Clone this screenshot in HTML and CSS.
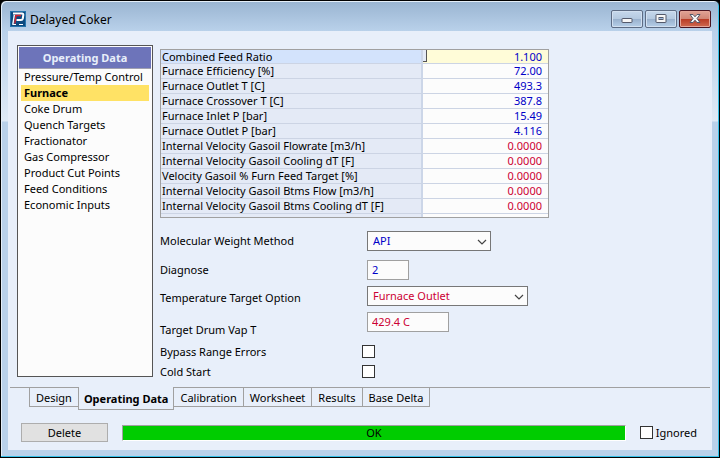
FILE: index.html
```html
<!DOCTYPE html>
<html lang="en">
<head>
<meta charset="utf-8">
<title>Delayed Coker</title>
<link rel="stylesheet" href="styles.css">
</head>
<body>
<div class="window">
  <header class="titlebar">
    <svg class="app-icon" width="16" height="16" viewBox="0 0 16 16" aria-hidden="true">
      <rect width="16" height="16" fill="#0c4a80"/>
      <rect x="0.5" y="0.5" width="15" height="15" fill="none" stroke="#2474ac"/>
      <path d="M3 2.500 H12 Q13.500 2.500 13.300 4 L12.800 7.500 Q12.500 9 11 9 H6.500" fill="none" stroke="#fff" stroke-width="2"/>
      <path d="M4.300 4 L2.800 13.500" fill="none" stroke="#fff" stroke-width="1.400"/>
      <path d="M5 4.500 H11 M6 5 L4.800 12.500" fill="none" stroke="#d8202c" stroke-width="1.400"/>
      <path d="M2.500 13.500 H6 M9 13.500 H13" stroke="#fff" stroke-width="1"/>
    </svg>
    <h1 class="title">Delayed Coker</h1>
    <div class="window-buttons">
      <button class="window-button" type="button" aria-label="Minimize">
        <svg width="12" height="10" viewBox="0 0 12 10"><rect x="1" y="4.500" width="10" height="4" rx="0.500" fill="#f6f6f6" stroke="#53596b"/></svg>
      </button>
      <button class="window-button" type="button" aria-label="Maximize">
        <svg width="12" height="10" viewBox="0 0 12 10"><rect x="1" y="0.500" width="10" height="8" rx="0.500" fill="#f6f6f6" stroke="#53596b"/><rect x="4" y="3.500" width="4" height="2" fill="#9db9dc" stroke="#53596b"/></svg>
      </button>
      <button class="window-button close" type="button" aria-label="Close">
        <svg width="12" height="10" viewBox="0 0 12 10"><path d="M1 0.500 H4 L6 2.800 L8 0.500 H11 L8 4.500 L11 8.500 H8 L6 6.200 L4 8.500 H1 L4 4.500 Z" fill="#f6f6f6" stroke="#53596b"/></svg>
      </button>
    </div>
  </header>
  <main class="client">
    <div class="page">
      <nav class="sidebar">
        <h2 class="sidebar-title">Operating Data</h2>
        <ul class="sidebar-list">
          <li><a href="#">Pressure/Temp Control</a></li>
          <li><a href="#" class="current">Furnace</a></li>
          <li><a href="#">Coke Drum</a></li>
          <li><a href="#">Quench Targets</a></li>
          <li><a href="#">Fractionator</a></li>
          <li><a href="#">Gas Compressor</a></li>
          <li><a href="#">Product Cut Points</a></li>
          <li><a href="#">Feed Conditions</a></li>
          <li><a href="#">Economic Inputs</a></li>
        </ul>
      </nav>
      <div class="details">
        <table class="grid">
          <tbody>
            <tr class="selected"><th scope="row">Combined Feed Ratio</th><td>1.100</td></tr>
            <tr><th scope="row">Furnace Efficiency [%]</th><td>72.00</td></tr>
            <tr><th scope="row">Furnace Outlet T [C]</th><td>493.3</td></tr>
            <tr><th scope="row">Furnace Crossover T [C]</th><td>387.8</td></tr>
            <tr><th scope="row">Furnace Inlet P [bar]</th><td>15.49</td></tr>
            <tr><th scope="row">Furnace Outlet P [bar]</th><td>4.116</td></tr>
            <tr><th scope="row">Internal Velocity Gasoil Flowrate [m3/h]</th><td class="default">0.0000</td></tr>
            <tr><th scope="row">Internal Velocity Gasoil Cooling dT [F]</th><td class="default">0.0000</td></tr>
            <tr><th scope="row">Velocity Gasoil % Furn Feed Target [%]</th><td class="default">0.0000</td></tr>
            <tr><th scope="row">Internal Velocity Gasoil Btms Flow [m3/h]</th><td class="default">0.0000</td></tr>
            <tr><th scope="row">Internal Velocity Gasoil Btms Cooling dT [F]</th><td class="default">0.0000</td></tr>
            <tr class="filler"><th></th><td></td></tr>
          </tbody>
        </table>
        <form class="form">
          <label for="method">Molecular Weight Method</label>
          <span class="select method">
            <select id="method"><option>API</option></select>
            <svg width="10" height="6" viewBox="0 0 10 6"><path d="M1 1 L5 5 L9 1" fill="none" stroke="#444" stroke-width="1.200"/></svg>
          </span>
          <label for="diagnose">Diagnose</label>
          <input class="field diagnose" id="diagnose" type="text" value="2">
          <label class="low" for="option">Temperature Target Option</label>
          <span class="select option">
            <select id="option"><option>Furnace Outlet</option></select>
            <svg width="10" height="6" viewBox="0 0 10 6"><path d="M1 1 L5 5 L9 1" fill="none" stroke="#444" stroke-width="1.200"/></svg>
          </span>
          <label class="low" for="target">Target Drum Vap T</label>
          <input class="field target" id="target" type="text" value="429.4 C">
          <label class="tick" for="bypass">Bypass Range Errors</label>
          <input class="check" id="bypass" type="checkbox">
          <label class="tick" for="cold">Cold Start</label>
          <input class="check" id="cold" type="checkbox">
        </form>
      </div>
    </div>
    <nav class="tabs">
      <button class="tab" type="button">Design</button>
      <button class="tab active" type="button">Operating Data</button>
      <button class="tab" type="button">Calibration</button>
      <button class="tab" type="button">Worksheet</button>
      <button class="tab" type="button">Results</button>
      <button class="tab" type="button">Base Delta</button>
      <span class="tab-rest"></span>
    </nav>
    <footer class="footer">
      <button class="delete" type="button">Delete</button>
      <div class="status" role="status">OK</div>
      <label class="ignored"><input class="check" type="checkbox">Ignored</label>
    </footer>
  </main>
</div>
</body>
</html>
```
FILE: styles.css
```css
* {
  box-sizing: border-box;
}

body {
  margin: 0;
  background: #000;
  color: #000;
  font: 11px/16px "Noto Sans", "Open Sans", sans-serif;
}

button,
input,
select {
  margin: 0;
  font: inherit;
  color: inherit;
}

.window {
  display: flex;
  flex-direction: column;
  min-height: 100vh;
  padding: 0 6px 7px;
  border: 1px solid #000;
  border-radius: 6px 6px 0 0;
  background: linear-gradient(#99b4d1, #b9d1ea 30px, #dfeaf6 120px, #b9d1ea 121px);
  box-shadow: inset -1px -1px #35c0e8, inset 1px 1px #e4eef8;
}

.titlebar {
  display: flex;
  align-items: flex-start;
  gap: 4px;
  height: 30px;
  padding: 9px 2px 0 3px;
}

.app-icon {
  margin-top: 1px;
}

.title {
  flex: 1;
  margin: 0;
  font-size: 12px;
  font-weight: 400;
  line-height: 20px;
}

.window-buttons {
  display: flex;
  gap: 2px;
}

.window-button {
  display: grid;
  place-items: center;
  width: 32px;
  height: 18px;
  padding: 0;
  border: 1px solid #5d6c84;
  border-radius: 2px;
  background: linear-gradient(#c6d8ec, #b4c9e0 50%, #98b0cc 50%, #b6cfe8);
  box-shadow: inset 0 0 0 1px #d2e0f0;
}

.window-button.close {
  border-color: #4a1420;
  background: linear-gradient(#e0a396, #d08574 50%, #b83a24 50%, #cf6a50);
  box-shadow: inset 0 0 0 1px #e4a598;
}

.client {
  display: flex;
  flex: 1;
  flex-direction: column;
  margin: 0 1px;
  padding: 14px 2px 8px;
  background: #e8effa;
}

.page {
  display: flex;
  flex: 1;
  gap: 7px;
  padding: 0 7px 10px;
}

.sidebar {
  flex: none;
  width: 136px;
  padding: 1px;
  border: 1px solid #555;
  background: #fcfcfc;
}

.sidebar-title {
  margin: 0;
  padding: 3px 0 2px;
  border-bottom: 1px solid #a0a0b0;
  background: #6d74ba;
  color: #e8effa;
  font-size: 11px;
  line-height: 16px;
  text-align: center;
}

.sidebar-list {
  margin: 0;
  padding: 0 2px;
  list-style: none;
}

.sidebar-list a {
  display: block;
  padding-left: 3px;
  color: #000;
  text-decoration: none;
}

.sidebar-list .current {
  background: #ffe265;
  font-weight: 700;
}

.details {
  flex: 1;
  padding-top: 4px;
}

.grid {
  width: 389px;
  border: 1px solid #a0a0a0;
  border-spacing: 0;
  background: #fcfcfc;
  line-height: 14px;
}

.grid th,
.grid td {
  height: 15px;
  padding: 0 1px;
  border-bottom: 1px solid #ccd4e4;
}

.grid th {
  width: 262px;
  border-right: 2px solid #ccd6e8;
  background: #e4eaf6;
  font-weight: 400;
  text-align: left;
}

.grid td {
  padding-right: 6px;
  color: #0000c8;
  text-align: right;
}

.grid .default {
  color: #cc0033;
}

.grid .selected th,
.grid .selected td {
  height: 14px;
  line-height: 13px;
}

.grid .selected th {
  background: #d3e3fc;
}

.grid .selected td {
  background: linear-gradient(#555, #555) 3px 0 / 1px 12px no-repeat, linear-gradient(#555, #555) 0 11px / 4px 1px no-repeat, linear-gradient(#e4eaf6, #e4eaf6) 0 0 / 3px 11px no-repeat, #fffcd8;
}

.grid .filler th,
.grid .filler td {
  height: 3px;
  border-bottom: 0;
}

.form {
  display: grid;
  grid-template-columns: 207px 1fr;
  grid-template-rows: 25px 22px 22px 28px 16px 16px;
  row-gap: 4px;
  align-items: start;
  margin: 13px 0 -3px;
}

.form label {
  line-height: 20px;
}

.form .low {
  align-self: end;
  padding-bottom: 2px;
  line-height: 16px;
}

.form .tick {
  line-height: 16px;
}

.select {
  position: relative;
}

.select select {
  display: block;
  width: 100%;
  height: 20px;
  padding: 0 5px;
  border: 1px solid #777;
  border-radius: 0;
  background: #fcfcfc;
  appearance: none;
}

.select svg {
  position: absolute;
  top: 8px;
  right: 4px;
  pointer-events: none;
}

.method {
  width: 124px;
  color: #0000c8;
}

.option {
  width: 161px;
  color: #cc0033;
}

.field {
  height: 20px;
  padding: 0 4px 2px;
  border: 1px solid #a0a0a0;
  background: #fcfcfc;
}

.diagnose {
  width: 42px;
  color: #0000c8;
}

.target {
  width: 82px;
  color: #cc0033;
}

.check {
  width: 13px;
  height: 13px;
  border: 1px solid #333;
  background: #fff;
  appearance: none;
}

.form .check {
  margin: 1px 0 0 -5px;
}

.tabs {
  display: flex;
  align-items: flex-start;
}

.tabs::before,
.tab-rest {
  border-top: 1px solid #a0a0a0;
  content: "";
}

.tabs::before {
  width: 19px;
}

.tab-rest {
  flex: 1;
}

.tab {
  height: 20px;
  margin-right: -1px;
  padding: 2px 6px 0;
  border: 1px solid #a0a0a0;
  background: none;
}

.tab.active {
  height: 23px;
  padding: 0 5px;
  border-top-color: transparent;
  font-weight: 700;
}

.footer {
  display: flex;
  align-items: center;
  gap: 14px;
  padding: 13px 13px 0 11px;
}

.delete {
  width: 87px;
  height: 19px;
  padding: 0;
  border: 1px solid #adadad;
  background: #e1e1e1;
}

.status {
  flex: 1;
  height: 16px;
  border: 1px solid;
  border-color: #a0a0a0 #fff #fff #a0a0a0;
  background: #00cc00;
  line-height: 14px;
  text-align: center;
}

.ignored {
  display: flex;
  align-items: center;
  gap: 3px;
}
```
